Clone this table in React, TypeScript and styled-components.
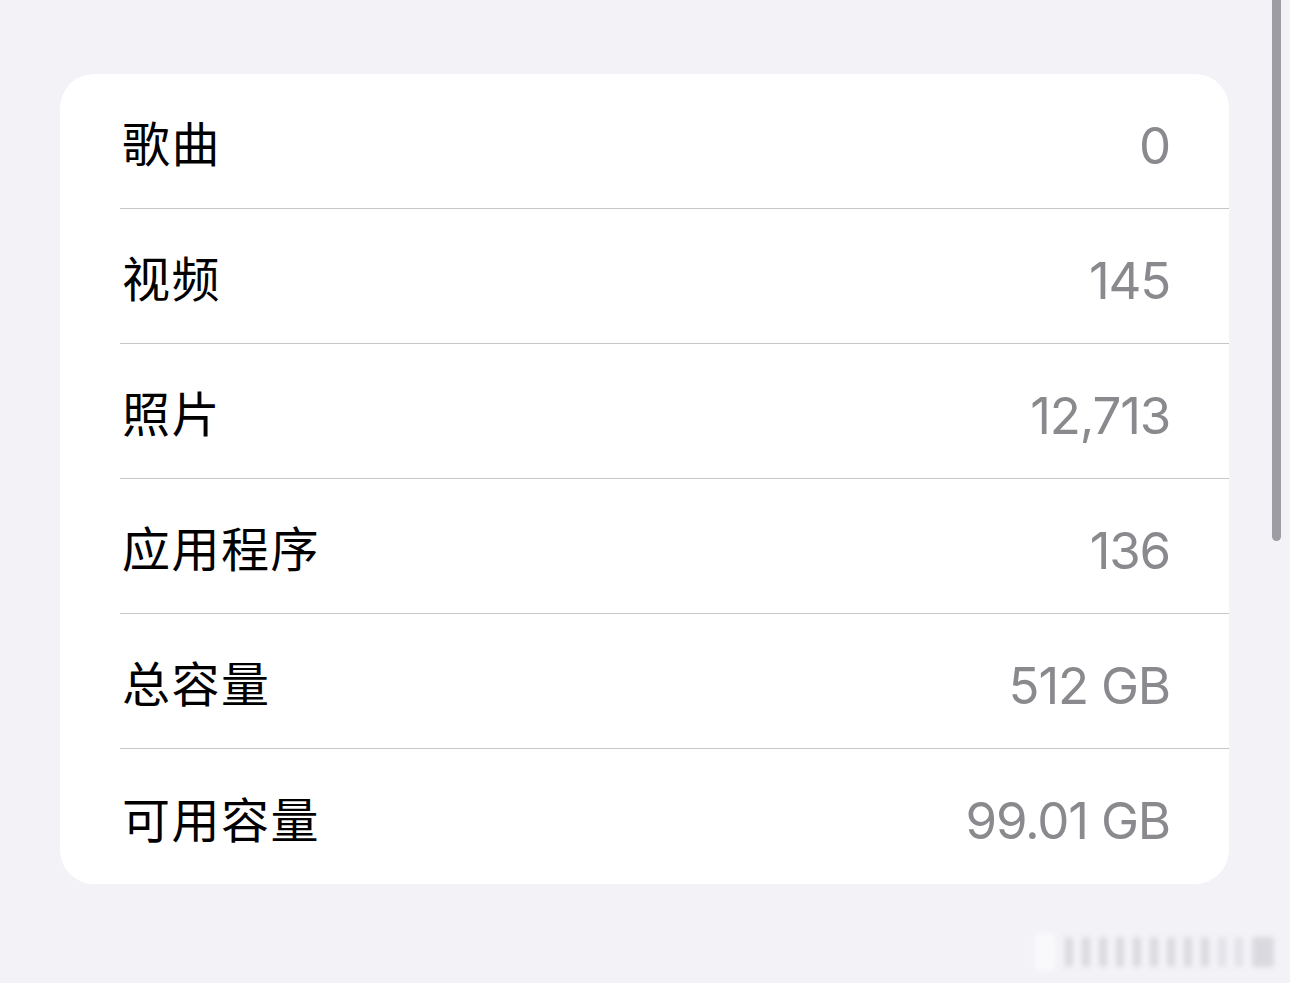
import React from "react";
import styled, { createGlobalStyle } from "styled-components";

const GlobalStyle = createGlobalStyle`
  html, body {
    margin: 0;
    padding: 0;
    background: #f2f2f7;
  }
  body {
    font-family: Inter, "Noto Sans CJK SC", sans-serif;
  }
`;

const Page = styled.div`
  position: relative;
  width: 1290px;
  height: 983px;
  overflow: hidden;
  background: #f2f2f7;
  padding: 74px 61px 0 60px;
  box-sizing: border-box;
`;

const Card = styled.div`
  background: #ffffff;
  border-radius: 34px;
  overflow: hidden;
`;

const Row = styled.div<{ last?: boolean }>`
  display: flex;
  align-items: center;
  justify-content: space-between;
  height: ${(p) => (p.last ? 135 : 134)}px;
  margin-left: 60px;
  padding-right: 59px;
  border-bottom: ${(p) => (p.last ? "none" : "1px solid #c6c6c8")};
  box-sizing: content-box;
`;

const Label = styled.span`
  font-family: "Noto Sans CJK SC", sans-serif;
  font-size: 48px;
  color: #000000;
  margin-left: 2px;
  letter-spacing: 1.5px;
`;

const Value = styled.span`
  font-family: Inter, "Noto Sans", sans-serif;
  font-size: 51px;
  color: #8a8a8e;
  letter-spacing: -1.2px;
  margin-top: 8px;
`;

const Scrollbar = styled.div`
  position: absolute;
  top: 0;
  right: 9px;
  width: 9px;
  height: 541px;
  border-radius: 0 0 5px 5px;
  background: #9e9da4;
`;

const Watermark = styled.div`
  position: absolute;
  left: 1034px;
  top: 933px;
  display: flex;
  align-items: center;
  gap: 9px;
  filter: blur(2.5px);
  opacity: 0.55;
`;

const Mark = styled.div<{ h: number; w: number; tone: string }>`
  width: ${(p) => p.w}px;
  height: ${(p) => p.h}px;
  background: ${(p) => p.tone};
  border-radius: 3px;
`;

const rows = [
  { label: "歌曲", value: "0" },
  { label: "视频", value: "145" },
  { label: "照片", value: "12,713" },
  { label: "应用程序", value: "136" },
  { label: "总容量", value: "512 GB" },
  { label: "可用容量", value: "99.01 GB" },
];

const marks = [
  { w: 22, h: 38, tone: "#ffffff" },
  { w: 8, h: 30, tone: "#c6c6cc" },
  { w: 8, h: 30, tone: "#c6c6cc" },
  { w: 8, h: 30, tone: "#c6c6cc" },
  { w: 8, h: 30, tone: "#c6c6cc" },
  { w: 8, h: 30, tone: "#c6c6cc" },
  { w: 8, h: 30, tone: "#c6c6cc" },
  { w: 8, h: 30, tone: "#c6c6cc" },
  { w: 8, h: 30, tone: "#c6c6cc" },
  { w: 8, h: 30, tone: "#c6c6cc" },
  { w: 8, h: 30, tone: "#d4d4da" },
  { w: 8, h: 30, tone: "#d4d4da" },
  { w: 22, h: 30, tone: "#c6c6cc" },
];

const App: React.FC = () => {
  return (
    <Page>
      <GlobalStyle />
      <Card>
        {rows.map((r, i) => (
          <Row key={r.label} last={i === rows.length - 1}>
            <Label>{r.label}</Label>
            <Value>{r.value}</Value>
          </Row>
        ))}
      </Card>
      <Scrollbar />
      <Watermark>
        {marks.map((m, i) => (
          <Mark key={i} w={m.w} h={m.h} tone={m.tone} />
        ))}
      </Watermark>
    </Page>
  );
};

export default App;
